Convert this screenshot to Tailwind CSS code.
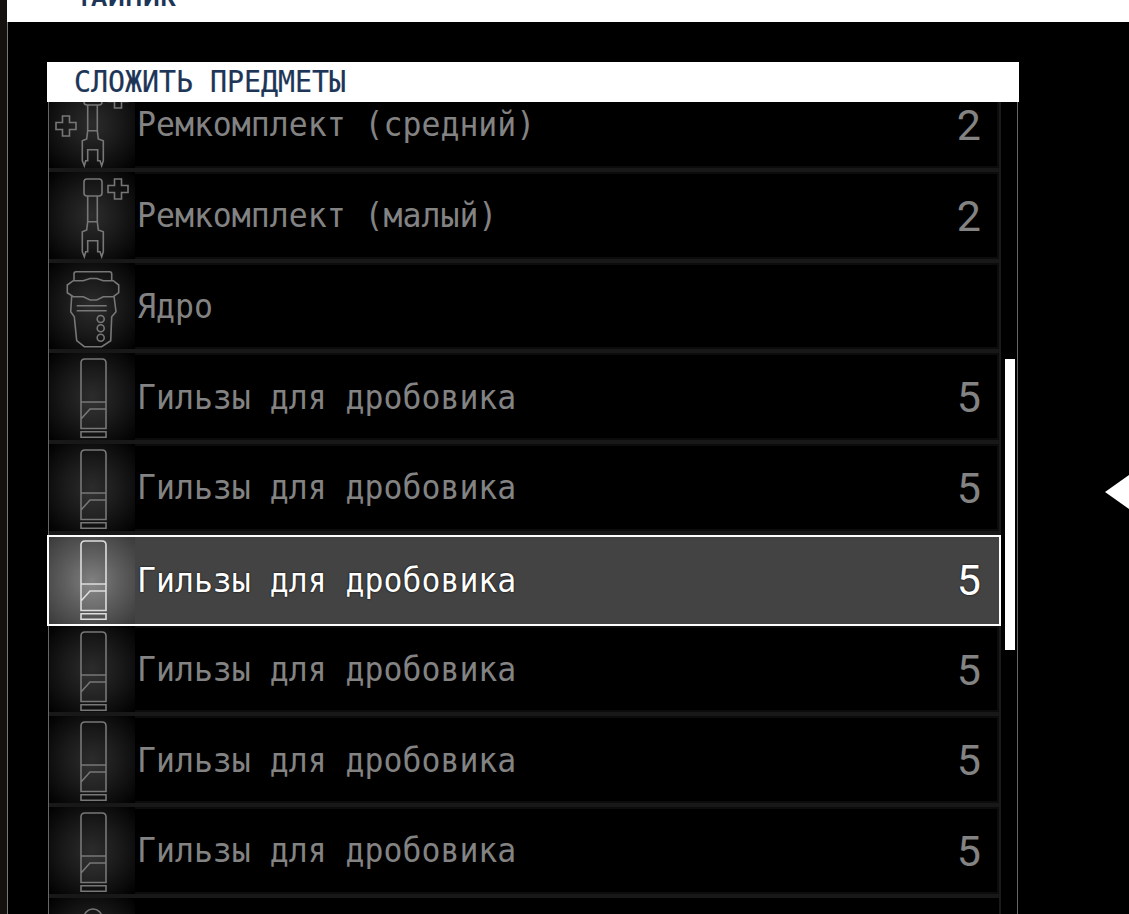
<!DOCTYPE html>
<html lang="ru">
<head>
  <meta charset="UTF-8" />
  <title>Сложить предметы</title>
  <script src="https://cdn.jsdelivr.net/npm/@tailwindcss/browser@4"></script>
</head>
<body class="bg-black overflow-hidden">
  <svg class="hidden">
    <defs>
      <symbol id="shell" viewBox="0 0 86 90">
        <path d="M32 49H57V75.5H32Z" fill="currentColor" fill-opacity="0.12" stroke="none" />
        <path d="M32 75.5V10Q32 6 36 6H53Q57 6 57 10V75.5Z M32 49H57 M32 66L41 56H57 M32 78.7H57V84.2H32Z" fill="none" stroke="currentColor" stroke-width="1.6" />
      </symbol>
      <symbol id="wrench" viewBox="0 0 86 90">
        <path d="M38 7H50Q53 7 53 10V21Q53 24 50 24H38Q35 24 35 21V10Q35 7 38 7Z M38.7 24V49.7 M48.3 24V49.7 M38.7 49.7H48.3 M38.7 49.7L37.7 58L33.3 59.7V79.7L35.3 84.7L36.7 79.7H38.7V68.7H48.7V79.7H51L52.7 84.7L54.3 79.7V59.7L49.3 58L48.3 49.7" fill="none" stroke="currentColor" stroke-width="1.6" />
      </symbol>
      <symbol id="plus" viewBox="0 0 22 22">
        <path d="M7.5 1H14.5V7.5H21V14.5H14.5V21H7.5V14.5H1V7.5H7.5Z" fill="none" stroke="currentColor" stroke-width="1.6" />
      </symbol>
      <symbol id="core" viewBox="0 0 86 90">
        <path d="M25 17V11Q25 8.7 27 8.7H60.7Q62.7 8.7 62.7 11V17 M18.3 22L24.3 17.7H34.3L41 15.5H47.7L54.3 17.7H64.3L69.7 22V29.7L64.3 33.7H54.3L47.7 37H41L34.3 33.7H24.3L18.3 29.7Z M22.7 33L21.7 48.7L25.3 53.7L27.7 77.7L35.3 83.7H52.7L61.7 77.7L62.7 53.7L67 48.7L65 33 M27.7 42.7H57.7 M27.7 47.7H57.7" fill="none" stroke="currentColor" stroke-width="1.6" />
        <circle cx="51.7" cy="56" r="3.5" fill="none" stroke="currentColor" stroke-width="1.6" />
        <circle cx="51.7" cy="65.3" r="3.5" fill="none" stroke="currentColor" stroke-width="1.6" />
        <circle cx="51.7" cy="74.7" r="3.5" fill="none" stroke="currentColor" stroke-width="1.6" />
      </symbol>
    </defs>
  </svg>

  <div class="flex h-[914px] overflow-hidden">
    <div class="w-[7px] shrink-0 bg-[#15110f]"></div>
    <main class="flex-1 min-w-0">
      <div class="h-[22px] bg-white overflow-hidden pl-[70px]">
        <div class="-mt-[20px] text-[#1d3557] font-bold text-[23.5px] leading-[34px] font-['Roboto',sans-serif] tracking-[1px] scale-y-[1.1]">ТАЙНИК</div>
      </div>
      <div class="h-[892px] border-l border-[#777] pt-[40px] pl-[39px]">
        <section class="w-[972px] h-[852px] flex flex-col">
          <h2 class="h-[40px] shrink-0 bg-white pl-[27px] text-[#1d3557] text-[28.25px] leading-[40px] font-['DejaVu_Sans_Mono',monospace] relative z-10 [-webkit-text-stroke:0.2px_#1d3557]"><span class="block scale-y-[1.08]">СЛОЖИТЬ ПРЕДМЕТЫ</span></h2>
          <div class="flex-1 min-h-0 mx-px border-x border-[#666] flex">
            <ul class="w-[952px] shrink-0 -mt-[21px] border-r-2 border-[#1a1a1a] font-['DejaVu_Sans_Mono',monospace] text-[31.5px] text-[#838383]">
              <li class="h-[90.75px] flex items-center border-b-4 border-[#181818] shadow-[inset_0_0_0_2px_#0c0c0c]">
                <div class="w-[86px] h-full shrink-0 relative text-[#777] bg-[radial-gradient(ellipse_at_center,#2c2c2c_0%,#1a1a1a_45%,#000_100%)]">
                  <svg class="w-[86px] h-[90px]"><use href="#wrench" /></svg>
                  <svg class="absolute left-[6px] top-[34px] w-[22px] h-[22px]"><use href="#plus" /></svg>
                  <svg class="absolute left-[58px] top-[6px] w-[22px] h-[22px]"><use href="#plus" /></svg>
                </div>
                <span class="pl-[2px] pt-[1px] flex-1 scale-y-[1.05]">Ремкомплект (средний)</span>
                <span class="pr-[18px] pt-[2px] font-['Roboto',sans-serif] text-[43px]">2</span>
              </li>
              <li class="h-[90.75px] flex items-center border-b-4 border-[#181818] shadow-[inset_0_0_0_2px_#0c0c0c]">
                <div class="w-[86px] h-full shrink-0 relative text-[#777] bg-[radial-gradient(ellipse_at_center,#2c2c2c_0%,#1a1a1a_45%,#000_100%)]">
                  <svg class="w-[86px] h-[90px]"><use href="#wrench" /></svg>
                  <svg class="absolute left-[58px] top-[6px] w-[22px] h-[22px]"><use href="#plus" /></svg>
                </div>
                <span class="pl-[2px] pt-[1px] flex-1 scale-y-[1.05]">Ремкомплект (малый)</span>
                <span class="pr-[18px] pt-[2px] font-['Roboto',sans-serif] text-[43px]">2</span>
              </li>
              <li class="h-[90.75px] flex items-center border-b-4 border-[#181818] shadow-[inset_0_0_0_2px_#0c0c0c]">
                <div class="w-[86px] h-full shrink-0 text-[#777] bg-[radial-gradient(ellipse_at_center,#2c2c2c_0%,#1a1a1a_45%,#000_100%)]">
                  <svg class="w-[86px] h-[90px]"><use href="#core" /></svg>
                </div>
                <span class="pl-[2px] pt-[1px] flex-1 scale-y-[1.05]">Ядро</span>
              </li>
              <li class="h-[90.75px] flex items-center border-b-4 border-[#181818] shadow-[inset_0_0_0_2px_#0c0c0c]">
                <div class="w-[86px] h-full shrink-0 text-[#777] bg-[radial-gradient(ellipse_at_center,#2c2c2c_0%,#1a1a1a_45%,#000_100%)]">
                  <svg class="w-[86px] h-[90px]"><use href="#shell" /></svg>
                </div>
                <span class="pl-[2px] pt-[1px] flex-1 scale-y-[1.05]">Гильзы для дробовика</span>
                <span class="pr-[18px] pt-[2px] font-['Roboto',sans-serif] text-[43px]">5</span>
              </li>
              <li class="h-[90.75px] flex items-center border-b-4 border-[#181818] shadow-[inset_0_0_0_2px_#0c0c0c]">
                <div class="w-[86px] h-full shrink-0 text-[#777] bg-[radial-gradient(ellipse_at_center,#2c2c2c_0%,#1a1a1a_45%,#000_100%)]">
                  <svg class="w-[86px] h-[90px]"><use href="#shell" /></svg>
                </div>
                <span class="pl-[2px] pt-[1px] flex-1 scale-y-[1.05]">Гильзы для дробовика</span>
                <span class="pr-[18px] pt-[2px] font-['Roboto',sans-serif] text-[43px]">5</span>
              </li>
              <li class="h-[90.75px] w-[954px] -ml-[2px] flex items-center bg-[#434343] border-2 border-white text-white [text-shadow:0_0_2px_#000] relative">
                <div class="w-[86px] h-full shrink-0 text-[#ddd] bg-[radial-gradient(ellipse_at_center,#808080_0%,#5e5e5e_45%,#3a3a3a_100%)]">
                  <svg class="w-[86px] h-[86px]" viewBox="0 0 86 86"><use href="#shell" y="-2" width="86" height="90" /></svg>
                </div>
                <span class="pl-[2px] flex-1 scale-y-[1.05]">Гильзы для дробовика</span>
                <span class="pr-[18px] font-['Roboto',sans-serif] text-[43px]">5</span>
              </li>
              <li class="h-[90.75px] flex items-center border-b-4 border-[#181818] shadow-[inset_0_0_0_2px_#0c0c0c]">
                <div class="w-[86px] h-full shrink-0 text-[#777] bg-[radial-gradient(ellipse_at_center,#2c2c2c_0%,#1a1a1a_45%,#000_100%)]">
                  <svg class="w-[86px] h-[90px]"><use href="#shell" /></svg>
                </div>
                <span class="pl-[2px] pt-[1px] flex-1 scale-y-[1.05]">Гильзы для дробовика</span>
                <span class="pr-[18px] pt-[2px] font-['Roboto',sans-serif] text-[43px]">5</span>
              </li>
              <li class="h-[90.75px] flex items-center border-b-4 border-[#181818] shadow-[inset_0_0_0_2px_#0c0c0c]">
                <div class="w-[86px] h-full shrink-0 text-[#777] bg-[radial-gradient(ellipse_at_center,#2c2c2c_0%,#1a1a1a_45%,#000_100%)]">
                  <svg class="w-[86px] h-[90px]"><use href="#shell" /></svg>
                </div>
                <span class="pl-[2px] pt-[1px] flex-1 scale-y-[1.05]">Гильзы для дробовика</span>
                <span class="pr-[18px] pt-[2px] font-['Roboto',sans-serif] text-[43px]">5</span>
              </li>
              <li class="h-[90.75px] flex items-center border-b-4 border-[#181818] shadow-[inset_0_0_0_2px_#0c0c0c]">
                <div class="w-[86px] h-full shrink-0 text-[#777] bg-[radial-gradient(ellipse_at_center,#2c2c2c_0%,#1a1a1a_45%,#000_100%)]">
                  <svg class="w-[86px] h-[90px]"><use href="#shell" /></svg>
                </div>
                <span class="pl-[2px] pt-[1px] flex-1 scale-y-[1.05]">Гильзы для дробовика</span>
                <span class="pr-[18px] pt-[2px] font-['Roboto',sans-serif] text-[43px]">5</span>
              </li>
              <li class="h-[90.75px] flex items-start">
                <div class="w-[86px] h-full shrink-0 text-[#777] bg-[radial-gradient(ellipse_at_center,#2c2c2c_0%,#1a1a1a_45%,#000_100%)]">
                  <svg class="w-[86px] h-[90px]" viewBox="0 0 86 90"><circle cx="44" cy="20" r="9" fill="none" stroke="currentColor" stroke-width="1.6" /></svg>
                </div>
              </li>
            </ul>
            <div class="ml-[4px] mt-[257px] w-[10px] h-[291px] bg-white shrink-0"></div>
          </div>
        </section>
      </div>
    </main>
  </div>
  <div class="absolute left-[1105px] top-[475px] w-0 h-0 border-y-[17px] border-y-transparent border-r-[24px] border-r-white"></div>
</body>
</html>
